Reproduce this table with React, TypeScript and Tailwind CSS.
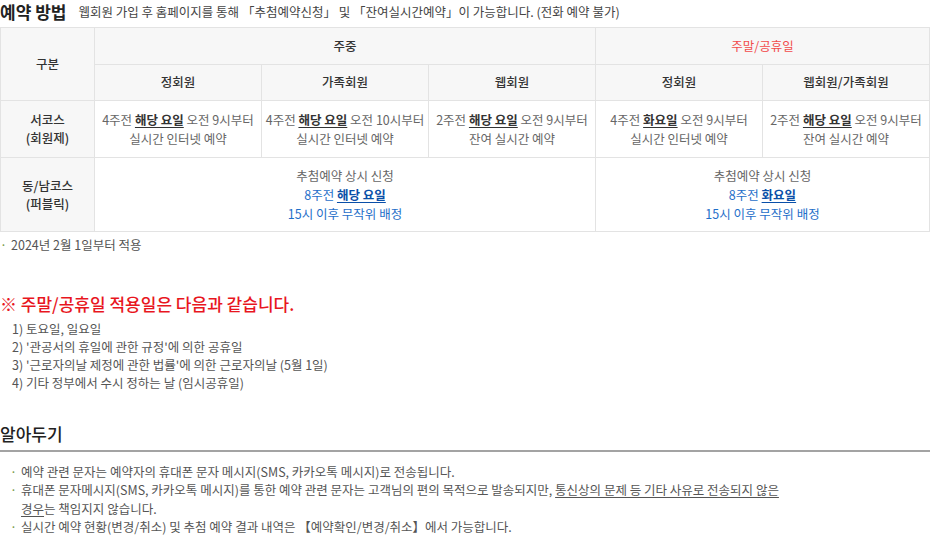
import React from "react";

const font = { fontFamily: '"Noto Sans CJK KR", "Noto Sans", sans-serif' };

const Em = ({ children }: { children: React.ReactNode }) => (
  <span className="font-bold text-[#333] underline underline-offset-2">{children}</span>
);

const notes = [
  "1) 토요일, 일요일",
  "2) '관공서의 휴일에 관한 규정'에 의한 공휴일",
  "3) '근로자의날 제정에 관한 법률'에 의한 근로자의날 (5월 1일)",
  "4) 기타 정부에서 수시 정하는 날 (임시공휴일)",
];

export default function App() {
  const th = "border border-[#e3e3e3] bg-[#f7f7f7] text-[#333] font-medium";
  const td = "border border-[#e3e3e3] bg-white text-[#666] leading-[19px]";

  return (
    <div className="w-[930px] bg-white text-[12.5px] text-[#555]" style={font}>
      {/* 예약 방법 */}
      <div className="flex items-center gap-[12px] h-[27px] pb-[3px]">
        <h2 className="text-[17px] font-bold text-[#222]">예약 방법</h2>
        <p className="text-[12.5px] text-[#444]">
          웹회원 가입 후 홈페이지를 통해 「추첨예약신청」 및 「잔여실시간예약」이 가능합니다. (전화 예약 불가)
        </p>
      </div>

      <table className="w-full border-collapse table-fixed text-center text-[12.5px]">
        <colgroup>
          <col className="w-[94px]" />
          <col />
          <col />
          <col />
          <col />
          <col />
        </colgroup>
        <tbody>
          <tr className="h-[37px]">
            <th rowSpan={2} className={th}>구분</th>
            <th colSpan={3} className={th}>주중</th>
            <th colSpan={2} className={`${th} !text-[#f24b4b] !font-normal`}>주말/공휴일</th>
          </tr>
          <tr className="h-[36px]">
            <th className={th}>정회원</th>
            <th className={th}>가족회원</th>
            <th className={th}>웹회원</th>
            <th className={th}>정회원</th>
            <th className={th}>웹회원/가족회원</th>
          </tr>
          <tr className="h-[57px]">
            <th className={`${th} leading-[18px]`}>서코스<br />(회원제)</th>
            <td className={td}>4주전 <Em>해당 요일</Em> 오전 9시부터<br />실시간 인터넷 예약</td>
            <td className={td}>4주전 <Em>해당 요일</Em> 오전 10시부터<br />실시간 인터넷 예약</td>
            <td className={td}>2주전 <Em>해당 요일</Em> 오전 9시부터<br />잔여 실시간 예약</td>
            <td className={td}>4주전 <Em>화요일</Em> 오전 9시부터<br />실시간 인터넷 예약</td>
            <td className={td}>2주전 <Em>해당 요일</Em> 오전 9시부터<br />잔여 실시간 예약</td>
          </tr>
          <tr className="h-[74px]">
            <th className={`${th} leading-[18px]`}>동/남코스<br />(퍼블릭)</th>
            <td colSpan={3} className={td}>
              추첨예약 상시 신청
              <br />
              <span className="text-[#1f6fc9]">
                8주전 <span className="font-bold text-[#0a4fa8] underline underline-offset-2">해당 요일</span>
              </span>
              <br />
              <span className="text-[#1f6fc9]">15시 이후 무작위 배정</span>
            </td>
            <td colSpan={2} className={td}>
              추첨예약 상시 신청
              <br />
              <span className="text-[#1f6fc9]">
                8주전 <span className="font-bold text-[#0a4fa8] underline underline-offset-2">화요일</span>
              </span>
              <br />
              <span className="text-[#1f6fc9]">15시 이후 무작위 배정</span>
            </td>
          </tr>
        </tbody>
      </table>

      <p className="mt-[4px] flex items-center gap-[4px] text-[12.5px] text-[#555]">
        <span className="text-[#7a9a4a]">·</span>2024년 2월 1일부터 적용
      </p>

      {/* 주말/공휴일 적용일 */}
      <h3 className="mt-[36px] text-[17px] font-medium text-[#e8161e]">※ 주말/공휴일 적용일은 다음과 같습니다.</h3>
      <ul className="mt-[4px] pl-[12px] text-[12.5px] leading-[18px] text-[#555]">
        {notes.map((n) => (
          <li key={n}>{n}</li>
        ))}
      </ul>

      {/* 알아두기 */}
      <h3 className="mt-[29px] pb-[3px] border-b-2 border-[#a3a3a3] text-[17px] font-medium text-[#222]">알아두기</h3>
      <ul className="mt-[11px] pl-[10px] text-[12.5px] leading-[18.5px] text-[#555]">
        <li className="flex gap-[4px]">
          <span className="text-[#7a9a4a]">·</span>
          <span>예약 관련 문자는 예약자의 휴대폰 문자 메시지(SMS, 카카오톡 메시지)로 전송됩니다.</span>
        </li>
        <li className="flex gap-[4px]">
          <span className="text-[#7a9a4a]">·</span>
          <span>
            휴대폰 문자메시지(SMS, 카카오톡 메시지)를 통한 예약 관련 문자는 고객님의 편의 목적으로 발송되지만,{" "}
            <span className="underline underline-offset-2">통신상의 문제 등 기타 사유로 전송되지 않은</span>
            <br />
            <span className="underline underline-offset-2">경우</span>는 책임지지 않습니다.
          </span>
        </li>
        <li className="flex gap-[4px]">
          <span className="text-[#7a9a4a]">·</span>
          <span>실시간 예약 현황(변경/취소) 및 추첨 예약 결과 내역은 【예약확인/변경/취소】에서 가능합니다.</span>
        </li>
      </ul>
    </div>
  );
}
